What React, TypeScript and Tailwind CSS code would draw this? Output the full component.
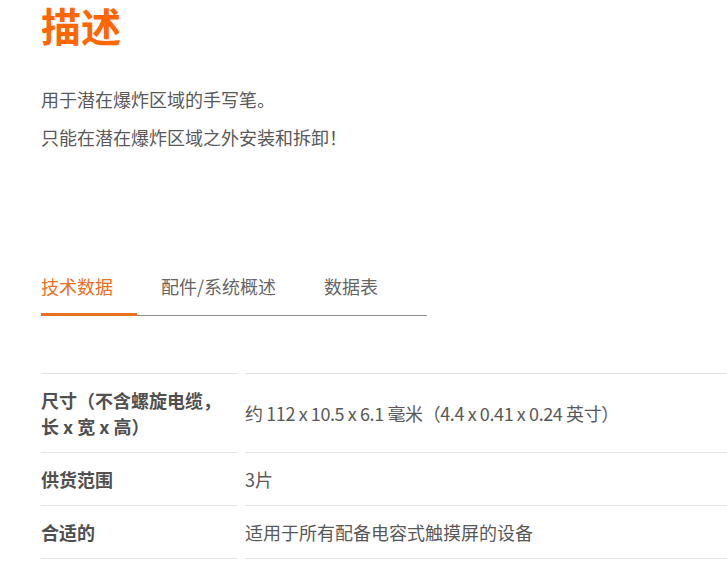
import React from "react";

const rows: { label: React.ReactNode; value: React.ReactNode }[] = [
  {
    label: (
      <>
        尺寸（不含螺旋电缆，
        <br />长 x 宽 x 高）
      </>
    ),
    value: <span className="tracking-[-0.4px]">约 112 x 10.5 x 6.1 毫米（4.4 x 0.41 x 0.24 英寸）</span>,
  },
  { label: "供货范围", value: "3片" },
  { label: "合适的", value: "适用于所有配备电容式触摸屏的设备" },
];

export default function App() {
  return (
    <div
      className="min-h-[568px] w-[727px] overflow-hidden bg-white pt-px pl-[41px]"
      style={{ fontFamily: '"Noto Sans CJK SC", "Noto Sans", sans-serif' }}
    >
      <h1 className="-mt-[5px] text-[40px] leading-[58px] font-bold text-[#ff6600]">描述</h1>

      <div className="mt-[32px] text-[18px] leading-[26px] text-[#595959]">
        <p>用于潜在爆炸区域的手写笔。</p>
        <p className="mt-[12px]">只能在潜在爆炸区域之外安装和拆卸！</p>
      </div>

      <div className="mt-[123px] flex w-[386px] border-b border-[#8c8c8c]">
        <div className="-mb-px border-b-[3px] border-[#e8701f] pr-6 pb-[14px] text-[18px] leading-[26px] text-[#e8701f]">
          技术数据
        </div>
        <div className="px-6 pb-[14px] text-[18px] leading-[26px] text-[#666666]">配件/系统概述</div>
        <div className="px-6 pb-[14px] text-[18px] leading-[26px] text-[#666666]">数据表</div>
      </div>

      <div className="mt-[57px] grid grid-cols-[196px_1fr] gap-x-2 text-[18px] leading-[26px]">
        {rows.map((r, i) => (
          <React.Fragment key={i}>
            <div
              className={`flex items-center border-t border-[#e3e3e3] py-[13px] font-bold text-[#505050] ${
                i === rows.length - 1 ? "border-b" : ""
              }`}
            >
              <span>{r.label}</span>
            </div>
            <div
              className={`flex items-center border-t border-[#e3e3e3] py-[13px] text-[#595959] ${
                i === rows.length - 1 ? "border-b" : ""
              }`}
            >
              <span>{r.value}</span>
            </div>
          </React.Fragment>
        ))}
      </div>
    </div>
  );
}
